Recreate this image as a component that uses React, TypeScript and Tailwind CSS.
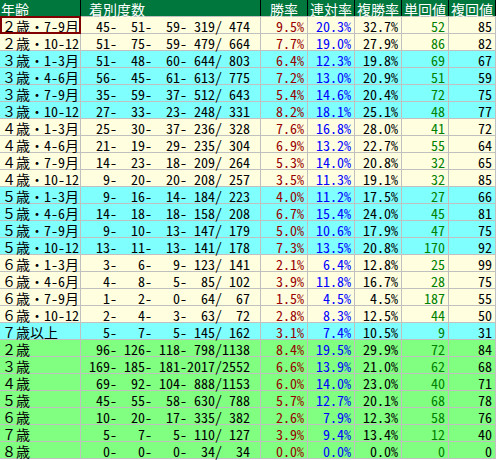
import React from "react";

type Row = [string, number, number, number, number, number, string, string, string, number, number, string];

const CREAM = "bg-[#ffffe0]";
const CYAN = "bg-[#80ffff]";
const GREEN = "bg-[#80ff80]";

const rows: Row[] = [
  ["２歳・7-9月", 45, 51, 59, 319, 474, "9.5", "20.3", "32.7", 52, 85, CREAM],
  ["２歳・10-12", 51, 75, 59, 479, 664, "7.7", "19.0", "27.9", 86, 82, CREAM],
  ["３歳・1-3月", 51, 48, 60, 644, 803, "6.4", "12.3", "19.8", 69, 67, CYAN],
  ["３歳・4-6月", 56, 45, 61, 613, 775, "7.2", "13.0", "20.9", 51, 59, CYAN],
  ["３歳・7-9月", 35, 59, 37, 512, 643, "5.4", "14.6", "20.4", 72, 75, CYAN],
  ["３歳・10-12", 27, 33, 23, 248, 331, "8.2", "18.1", "25.1", 48, 77, CYAN],
  ["４歳・1-3月", 25, 30, 37, 236, 328, "7.6", "16.8", "28.0", 41, 72, CREAM],
  ["４歳・4-6月", 21, 19, 29, 235, 304, "6.9", "13.2", "22.7", 55, 64, CREAM],
  ["４歳・7-9月", 14, 23, 18, 209, 264, "5.3", "14.0", "20.8", 32, 65, CREAM],
  ["４歳・10-12", 9, 20, 20, 208, 257, "3.5", "11.3", "19.1", 32, 85, CREAM],
  ["５歳・1-3月", 9, 16, 14, 184, 223, "4.0", "11.2", "17.5", 27, 66, CYAN],
  ["５歳・4-6月", 14, 18, 18, 158, 208, "6.7", "15.4", "24.0", 45, 81, CYAN],
  ["５歳・7-9月", 9, 10, 13, 147, 179, "5.0", "10.6", "17.9", 47, 75, CYAN],
  ["５歳・10-12", 13, 11, 13, 141, 178, "7.3", "13.5", "20.8", 170, 92, CYAN],
  ["６歳・1-3月", 3, 6, 9, 123, 141, "2.1", "6.4", "12.8", 25, 99, CREAM],
  ["６歳・4-6月", 4, 8, 5, 85, 102, "3.9", "11.8", "16.7", 28, 75, CREAM],
  ["６歳・7-9月", 1, 2, 0, 64, 67, "1.5", "4.5", "4.5", 187, 55, CREAM],
  ["６歳・10-12", 2, 4, 3, 63, 72, "2.8", "8.3", "12.5", 44, 50, CREAM],
  ["７歳以上", 5, 7, 5, 145, 162, "3.1", "7.4", "10.5", 9, 31, CYAN],
  ["２歳", 96, 126, 118, 798, 1138, "8.4", "19.5", "29.9", 72, 84, GREEN],
  ["３歳", 169, 185, 181, 2017, 2552, "6.6", "13.9", "21.0", 62, 68, GREEN],
  ["４歳", 69, 92, 104, 888, 1153, "6.0", "14.0", "23.0", 40, 71, GREEN],
  ["５歳", 45, 55, 58, 630, 788, "5.7", "12.7", "20.1", 68, 78, GREEN],
  ["６歳", 10, 20, 17, 335, 382, "2.6", "7.9", "12.3", 58, 76, GREEN],
  ["７歳", 5, 7, 5, 110, 127, "3.9", "9.4", "13.4", 12, 40, GREEN],
  ["８歳", 0, 0, 0, 34, 34, "0.0", "0.0", "0.0", 0, 0, GREEN],
];

const pad = (n: number, w: number) => String(n).padStart(w, " ");
const record = (a: number, b: number, c: number, d: number, e: number) =>
  `${pad(a, 3)}- ${pad(b, 3)}- ${pad(c, 3)}-${pad(d, 4)}/${pad(e, 4)}`;

const font = "font-['Noto_Sans_Mono_CJK_JP','Noto_Sans_CJK_JP','Liberation_Mono',monospace]";
const cell = "flex items-center pt-[2px] border-r border-b border-[#c0c0c0] whitespace-pre";
const num = `${cell} w-[47px] justify-end pr-[3px]`;
const head = "flex items-center pt-[2px] border-r border-[#000] whitespace-pre";

export default function App() {
  return (
    <div className={`w-[497px] h-[460px] bg-white text-[14px] leading-[14px] ${font}`}>
      <div className="w-[496px]">
        <div className="flex h-[17px] bg-[#00773c] text-white border-b border-[#c0c0c0]">
          <div className={`${head} w-[81px] pl-[1px]`}>年齢</div>
          <div className={`${head} w-[180px] pl-[8px]`}>着別度数</div>
          <div className={`${head} w-[47px] justify-center`}>勝率</div>
          <div className={`${head} w-[47px] justify-center`}>連対率</div>
          <div className={`${head} w-[47px] justify-center`}>複勝率</div>
          <div className={`${head} w-[47px] justify-center`}>単回値</div>
          <div className={`${head} w-[47px] justify-center`}>複回値</div>
        </div>
        {rows.map((r, i) => (
          <div key={i} className={`flex h-[17px] ${r[11]} text-black`}>
            <div className={`${cell} relative w-[81px] pl-[2px]`}>
              {r[0]}
              {i === 0 && (
                <div className="absolute left-0 top-[-1px] w-[81px] h-[18px] border-2 border-[#800000]" />
              )}
            </div>
            <div className={`${cell} w-[180px] justify-end pr-[10px]`}>
              {record(r[1], r[2], r[3], r[4], r[5])}
            </div>
            <div className={`${num} text-[#990000]`}>{r[6]}%</div>
            <div className={`${num} text-[#0000ff]`}>{r[7]}%</div>
            <div className={num}>{r[8]}%</div>
            <div className={`${num} text-[#008000]`}>{r[9]}</div>
            <div className={num}>{r[10]}</div>
          </div>
        ))}
      </div>
    </div>
  );
}
